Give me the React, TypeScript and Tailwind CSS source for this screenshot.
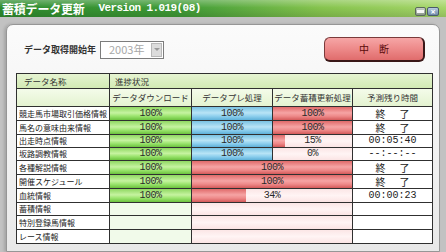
import React from "react";

const jp = "font-['Noto_Sans_CJK_JP','Noto_Sans',sans-serif]";
const mono = "font-['Liberation_Mono',monospace]";

interface Row {
  name: string;
  dl: number | null;
  pre?: number | null;
  st?: number | null;
  merged?: number | null;
  time: string;
}

const rows: Row[] = [
  { name: "競走馬市場取引価格情報", dl: 100, pre: 100, st: 100, time: "終了" },
  { name: "馬名の意味由来情報", dl: 100, pre: 100, st: 100, time: "終了" },
  { name: "出走時点情報", dl: 100, pre: 100, st: 15, time: "00:05:40" },
  { name: "坂路調教情報", dl: 100, pre: 100, st: 0, time: "--:--:--" },
  { name: "各種解説情報", dl: 100, merged: 100, time: "終了" },
  { name: "開催スケジュール", dl: 100, merged: 100, time: "終了" },
  { name: "血統情報", dl: 100, merged: 34, time: "00:00:23" },
  { name: "蓄積情報", dl: null, merged: null, time: "" },
  { name: "特別登録馬情報", dl: null, merged: null, time: "" },
  { name: "レース情報", dl: null, merged: null, time: "" },
];

function Bar({ value, fill, empty }: { value: number | null | undefined; fill: string; empty: string }) {
  return (
    <div className={`relative h-full ${empty}`}>
      {value != null && <div className={`h-full ${fill}`} style={{ width: `${value}%` }} />}
      {value != null && (
        <span className={`absolute inset-0 flex items-center justify-center text-[10px] leading-none tracking-[-0.5px] text-[#2a2a2a] ${mono}`}>
          {value}%
        </span>
      )}
    </div>
  );
}

const green = "bg-[linear-gradient(to_bottom,#8fd862,#c6f3a0_45%,#9be46e_70%,#6cc23e)]";
const greenEmpty = "bg-[#f1faea]";
const blue = "bg-[linear-gradient(to_bottom,#79c2e2,#b8e4f6_45%,#8fd0ee_70%,#5eb0d8)]";
const red = "bg-[linear-gradient(to_bottom,#e06a6a,#f6a4a4_45%,#ee8a8a_70%,#d45a5a)]";
const redEmpty = "bg-[linear-gradient(to_bottom,#fbe6e6,#fff4f4_50%,#fbe4e4)]";

function HeadCell({ children, className = "" }: { children?: React.ReactNode; className?: string }) {
  return (
    <div className={`flex items-center text-[8.5px] leading-none text-[#333] ${jp} ${className}`}>{children}</div>
  );
}

function TimeCell({ time }: { time: string }) {
  if (time === "終了") {
    return (
      <div className={`bg-white flex items-center justify-center gap-[14px] text-[10px] leading-none text-[#222] ${jp}`}>
        <span>終</span>
        <span>了</span>
      </div>
    );
  }
  return (
    <div className={`bg-white flex items-center justify-center text-[10px] leading-none text-[#222] ${mono}`}>{time}</div>
  );
}

export default function App() {
  return (
    <div className="w-[446px] h-[252px] overflow-hidden bg-[#c2c2c2]">
      <div className="h-[17px] flex items-center justify-between bg-[linear-gradient(to_bottom,rgba(255,255,255,0.3),rgba(255,255,255,0)_45%,rgba(0,0,0,0.12)),linear-gradient(to_right,#2e8c2e,#3f9b36_40%,#86c44e_72%,#a6d66a)]">
        <div className="pl-[2px] flex items-center text-white font-bold">
          <span className={`text-[12px] leading-none tracking-[-0.2px] ${jp}`}>蓄積データ更新</span>
          <span className={`ml-[14px] text-[11px] leading-none tracking-[-0.6px] ${mono}`}>Version 1.019(08)</span>
        </div>
        <div className="flex gap-px pr-[7px] self-end mb-px">
          <div className="w-[11px] h-[9px] rounded-[2px] border border-[#5a6a5a] bg-[linear-gradient(to_bottom,#c8d0c8,#8a968a)] flex items-center justify-center">
            <div className="w-[7px] h-[3px] bg-white/90" />
          </div>
          <div className="w-[12px] h-[9px] rounded-[2px] border border-[#4a5a6a] bg-[linear-gradient(to_bottom,#b8cce0,#6e8aa8)] flex items-center justify-center text-white text-[9px] leading-none font-bold">
            ×
          </div>
        </div>
      </div>
      <div className="px-[6px] pt-[7px] h-[235px]">
        <div className="h-full rounded-t-[7px] border border-[#969696] bg-[linear-gradient(to_bottom,#fbfbfb,#f1f1f1_60%,#e8e8e8)] pl-[9px] pr-[6px] pt-[12px] shadow-[-2px_0_3px_rgba(0,0,0,0.15)]">
          <div className="h-[25px] flex items-center justify-between pl-[8px] pr-[8px]">
            <div className="flex items-center gap-[4px]">
              <span className={`text-[9px] leading-none font-bold text-[#333] ${jp}`}>データ取得開始年</span>
              <div className="w-[64px] h-[18px] border border-[#7c7c7c] bg-white flex items-center justify-between pl-[8px] pr-px">
                <span className={`text-[11px] leading-none text-[#a8a8a8] ${jp}`}>2003年</span>
                <div className="w-[11px] h-[14px] bg-[#dcdcdc] border border-[#b8b8b8] flex items-center justify-center">
                  <div className="w-0 h-0 border-l-[3px] border-r-[3px] border-t-[3px] border-l-transparent border-r-transparent border-t-[#9a9a9a]" />
                </div>
              </div>
            </div>
            <div className="w-[101px] h-[25px] rounded-[6px] border border-[#7a3a3a] border-b-[2px] border-r-[2px] border-b-[#3a1818] border-r-[#3a1818] bg-[linear-gradient(to_bottom,#f6a6a6,#ee8c8c_45%,#e06c6c)] flex items-center justify-center">
              <span className={`text-[10px] leading-none text-[#5a0a0a] ${jp}`}>中　断</span>
            </div>
          </div>
          <div className="mt-[11px] w-[417px] grid grid-cols-[92px_81px_80px_79px_79px] grid-rows-[14px_17px_13px_13px_12px_12px_13px_13px_13px_12px_13px_13px] gap-px p-px bg-[#303030]">
            <HeadCell className="pl-[7px] bg-[linear-gradient(to_bottom,#e6f4d2,#d2eab4)]">データ名称</HeadCell>
            <HeadCell className="col-span-4 pl-[5px] bg-[linear-gradient(to_bottom,#e6f4d2,#d2eab4)]">進捗状況</HeadCell>
            <HeadCell className="bg-[linear-gradient(to_bottom,#f4fbea,#e4f3d0)]" />
            <HeadCell className="justify-center bg-[linear-gradient(to_bottom,#f4fbea,#e4f3d0)]">データダウンロード</HeadCell>
            <HeadCell className="justify-center bg-[linear-gradient(to_bottom,#f4fbea,#e4f3d0)]">データプレ処理</HeadCell>
            <HeadCell className="justify-center bg-[linear-gradient(to_bottom,#f4fbea,#e4f3d0)]">データ蓄積更新処理</HeadCell>
            <HeadCell className="justify-center bg-[linear-gradient(to_bottom,#f4fbea,#e4f3d0)]">予測残り時間</HeadCell>
            {rows.map((r) => (
              <React.Fragment key={r.name}>
                <div className={`bg-white flex items-center pl-[2px] text-[8px] leading-none text-[#222] whitespace-nowrap ${jp}`}>
                  {r.name}
                </div>
                <Bar value={r.dl} fill={green} empty={greenEmpty} />
                {r.merged !== undefined ? (
                  <div className="col-span-2">
                    <Bar value={r.merged} fill={red} empty={redEmpty} />
                  </div>
                ) : (
                  <>
                    <Bar value={r.pre} fill={blue} empty="bg-[#eaf6fc]" />
                    <Bar value={r.st} fill={red} empty={redEmpty} />
                  </>
                )}
                <TimeCell time={r.time} />
              </React.Fragment>
            ))}
          </div>
        </div>
      </div>
    </div>
  );
}
